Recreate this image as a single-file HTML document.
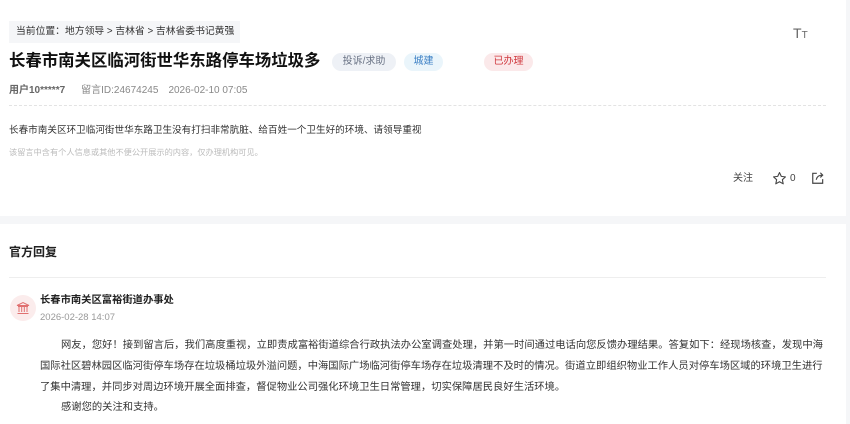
<!DOCTYPE html>
<html><head><meta charset="utf-8"><style>
*{margin:0;padding:0;box-sizing:border-box}
body{width:850px;height:424px;overflow:hidden;background:#f5f6f8;font-family:"Liberation Sans","Noto Sans CJK SC",sans-serif;color:#333;position:relative}
.card{position:absolute;left:0;width:846px;background:#fff}
.a{position:absolute;white-space:nowrap}
.tag{position:absolute;height:18px;border-radius:9px;font-size:10px;line-height:18px;text-align:center}
</style></head><body>
<div class="card" style="top:0;height:216px">
 <div class="a" style="left:9px;top:21px;width:231px;height:22px;background:#f5f6f8;font-size:9.8px;line-height:22px;padding-left:7px;color:#333">当前位置：地方领导 &gt; 吉林省 &gt; 吉林省委书记黄强</div>
 <div class="a" style="left:793px;top:25px;font-size:14px;color:#666">T<span style="font-size:10px">T</span></div>
 <div class="a" style="left:9px;top:49px;font-size:16.4px;font-weight:bold;color:#111;line-height:24px">长春市南关区临河街世华东路停车场垃圾多</div>
 <div class="tag" style="left:332px;top:53px;width:64px;background:#eef1f6;color:#6a7385">投诉/求助</div>
 <div class="tag" style="left:404px;top:53px;width:39px;background:#eaf5fb;color:#3b7fc4">城建</div>
 <div class="tag" style="left:484px;top:53px;width:49px;background:#fbe9ea;color:#d0393f">已办理</div>
 <div class="a" style="left:9px;top:84px;font-size:10px;line-height:14px;color:#888"><b style="color:#666">用户10*****7</b><span style="margin-left:16px">留言ID:24674245</span><span style="margin-left:10px">2026-02-10 07:05</span></div>
 <div class="a" style="left:9px;top:105px;width:817px;border-top:1px dashed #e3e3e3"></div>
 <div class="a" style="left:9px;top:124px;font-size:9.6px;line-height:14px;color:#333">长春市南关区环卫临河街世华东路卫生没有打扫非常肮脏、给百姓一个卫生好的环境、请领导重视</div>
 <div class="a" style="left:9px;top:147px;font-size:8.2px;line-height:12px;color:#bbb">该留言中含有个人信息或其他不便公开展示的内容，仅办理机构可见。</div>
 <div class="a" style="left:733px;top:172px;font-size:10px;line-height:14px;color:#444">关注</div>
 <svg class="a" style="left:772px;top:171px" width="15" height="15" viewBox="0 0 24 24" fill="none" stroke="#444" stroke-width="1.8" stroke-linejoin="round"><path d="M12 2.5l2.9 6.1 6.6.8-4.9 4.5 1.3 6.6L12 17.2l-5.9 3.3 1.3-6.6-4.9-4.5 6.6-.8z"/></svg>
 <div class="a" style="left:790px;top:172px;font-size:10px;line-height:14px;color:#444">0</div>
 <svg class="a" style="left:811px;top:171px" width="14" height="14" viewBox="0 0 24 24" fill="none" stroke="#444" stroke-width="2"><path d="M10 4H3v17h17v-7"/><path d="M9 15c1-5 5-8 11-8M16 3l4 4-4 4"/></svg>
</div>
<div class="card" style="top:224px;height:200px">
 <div class="a" style="left:9px;top:20px;font-size:12px;font-weight:bold;color:#222;line-height:16px">官方回复</div>
 <div class="a" style="left:9px;top:53px;width:817px;border-top:1px solid #eee"></div>
 <div class="a" style="left:10px;top:71px;width:26px;height:26px;border-radius:50%;background:#fbecec"></div>
 <svg class="a" style="left:16px;top:77px" width="14" height="14" viewBox="0 0 14 14" fill="none" stroke="#e07070" stroke-width="1"><path d="M1 4.5L7 1.5l6 3zM2 5.5h10M3 6v5M5.7 6v5M8.3 6v5M11 6v5M1.5 12.5h11"/></svg>
 <div class="a" style="left:40px;top:70px;font-size:10.3px;font-weight:bold;color:#222;line-height:14px">长春市南关区富裕街道办事处</div>
 <div class="a" style="left:40px;top:87px;font-size:9.5px;color:#999;line-height:13px">2026-02-28 14:07</div>
 <div class="a" style="left:40px;top:112px;font-size:10.3px;line-height:20.8px;color:#333">
  <span style="padding-left:21px">网友，您好！接到留言后，我们高度重视，立即责成富裕街道综合行政执法办公室调查处理，并第一时间通过电话向您反馈办理结果。答复如下：经现场核查，发现中海</span><br>国际社区碧林园区临河街停车场存在垃圾桶垃圾外溢问题，中海国际广场临河街停车场存在垃圾清理不及时的情况。街道立即组织物业工作人员对停车场区域的环境卫生进行<br>了集中清理，并同步对周边环境开展全面排查，督促物业公司强化环境卫生日常管理，切实保障居民良好生活环境。<br><span style="padding-left:21px">感谢您的关注和支持。</span>
 </div>
</div>
</body></html>
